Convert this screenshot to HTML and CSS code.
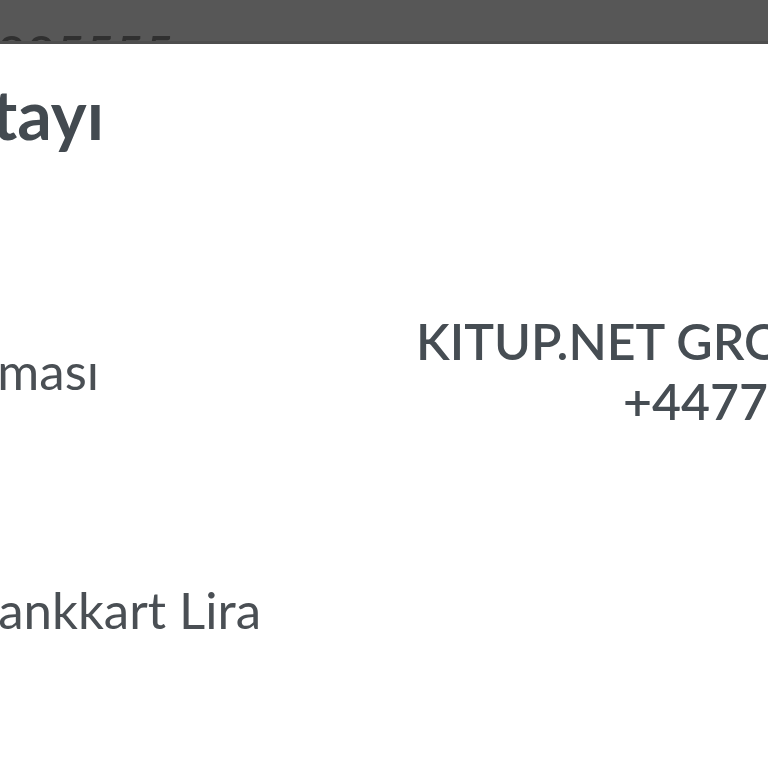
FILE: index.html
```html
<!DOCTYPE html>
<html lang="tr">
<head>
<meta charset="utf-8">
<title>İşlem Detayı</title>
<link rel="stylesheet" href="styles.css">
</head>
<body>
<div class="screen">
  <header class="topbar">
    <div class="topbar-text">005555</div>
  </header>
  <main class="sheet">
    <div class="title-row">
      <h1 class="title">İşlem Detayı</h1>
    </div>
    <div class="detail-row row-desc">
      <div class="label-cell label-desc"><span class="label">İşlem Açıklaması</span></div>
      <div class="value-cell">
        <div class="value">KITUP.NET GROUP</div>
        <div class="value value-second">+447700900123</div>
      </div>
    </div>
    <div class="detail-row row-card">
      <div class="label-cell label-card"><span class="label">Bankkart Lira</span></div>
    </div>
  </main>
</div>
</body>
</html>
```
FILE: styles.css
```css
html, body {
  margin: 0;
  padding: 0;
  background: #ffffff;
}
body {
  width: 768px;
  height: 768px;
  overflow: hidden;
  font-family: "Lato", "Open Sans", sans-serif;
}
.screen {
  display: flex;
  flex-direction: column;
  width: 768px;
  height: 768px;
  overflow: hidden;
}
.topbar {
  height: 41px;
  flex: none;
  background: #575757;
  border-bottom: 3px solid #4e4e4e;
  overflow: hidden;
}
.topbar-text {
  margin-top: 28px;
  margin-left: -3px;
  font-size: 51px;
  line-height: 50px;
  font-weight: 400;
  color: #303030;
  letter-spacing: 0;
  white-space: nowrap;
}
.sheet {
  flex: 1;
  background: #ffffff;
  display: flex;
  flex-direction: column;
}
.title-row {
  display: flex;
  justify-content: flex-end;
  width: 104px;
  margin-top: 36px;
}
.title {
  margin: 0;
  font-size: 68px;
  line-height: 68px;
  font-weight: 700;
  color: #434a50;
  white-space: nowrap;
  flex: none;
}
.detail-row {
  display: grid;
  grid-template-columns: 416px 1fr;
  align-items: center;
}
.row-desc {
  margin-top: 163px;
}
.row-card {
  margin-top: 149px;
}
.label-cell {
  display: flex;
  justify-content: flex-end;
}
.label-desc {
  width: 99px;
}
.label-card {
  width: 261px;
}
.label {
  font-size: 51px;
  line-height: 60px;
  font-weight: 400;
  color: #4a4f54;
  white-space: nowrap;
  flex: none;
}
.value-cell {
  display: flex;
  flex-direction: column;
  white-space: nowrap;
}
.value {
  font-size: 50px;
  line-height: 60px;
  font-weight: 600;
  color: #464d53;
}
.value-second {
  padding-left: 207px;
}
```
